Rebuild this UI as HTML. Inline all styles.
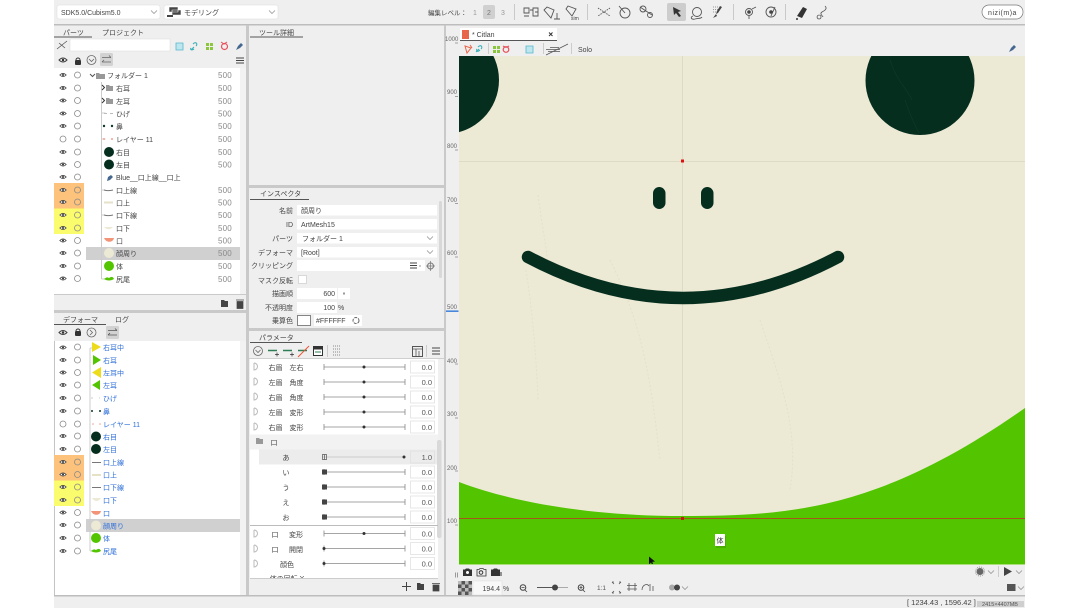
<!DOCTYPE html>
<html lang="ja"><head><meta charset="utf-8"><title>Cubism Editor</title>
<style>
html,body{margin:0;padding:0;background:#fff;width:1080px;height:608px;overflow:hidden}
svg{display:block}
body>svg{filter:blur(.3px)}
text{font-family:"Liberation Sans","Noto Sans CJK JP",sans-serif;font-size:7px;fill:#444}
.v{fill:#8a8a8a;font-size:8px;letter-spacing:.2px}
.b text,text.b{fill:#2f6fd8}
.r{text-anchor:end}.m{text-anchor:middle}
.n{font-size:7.5px;fill:#555}
.rl{font-size:6px;fill:#666}
.i{fill:none;stroke:#555;stroke-width:.9}
</style></head><body>
<svg width="1080" height="608" viewBox="0 0 1080 608" xmlns="http://www.w3.org/2000/svg">
<defs>
<g id="e"><path d="M-3.2 0Q0-3.2 3.2 0Q0 3.2-3.2 0Z" fill="#fff" stroke="#444" stroke-width=".8"/><circle r="1" fill="#333"/></g>
<circle id="o" r="3" fill="none" stroke="#8a8a8a" stroke-width=".8"/>
<path id="c" d="M-3-1.5L0 1.5L3-1.5" fill="none" stroke="#888" stroke-width=".7"/>
<g id="sl"><path d="M324 0H405M324-3V3M405-3V3" stroke="#888" stroke-width=".8" fill="none"/></g>
</defs>
<rect x="54" width="971" height="608" fill="#efefef"/>
<!-- top toolbar -->
<rect x="54" y="24" width="971" height="1.500" fill="#bdbdbd"/>
<rect x="57" y="5" width="103" height="14" rx="2" fill="#fff" stroke="#ddd" stroke-width=".5"/>
<text x="61" y="15">SDK5.0/Cubism5.0</text><use href="#c" x="154" y="12"/>
<rect x="164" y="5" width="114" height="14" rx="2" fill="#fff" stroke="#ddd" stroke-width=".5"/>
<path d="M169 7h9v5h-9zM172 10h9v5h-9z" fill="#444" stroke="#fff" stroke-width=".6"/><path d="M167 15h6v2h-6z" fill="#444"/>
<text x="184" y="15">モデリング</text><use href="#c" x="272" y="12"/>
<text x="428" y="15" style="font-size:6.500px">編集レベル：</text>
<text x="475" y="15" class="m" style="fill:#999">1</text>
<rect x="483" y="5" width="12" height="14" rx="2" fill="#d0d0d0"/><text x="489" y="15" class="m" style="fill:#777">2</text>
<text x="503" y="15" class="m" style="fill:#999">3</text>
<g stroke="#c9c9c9" fill="none"><path d="M514.500 4V20M587.500 4V20M733.500 4V20M785.500 4V20"/></g>
<g class="i">
<path d="M524 8h5v5h-5zM524 16h5M533 8h5v8h-5zM530 10h3M535 12h3"/>
<path d="M547 7l7 3-3 8-7-8zM557 13v6M554 19h6"/>
<path d="M568 6l8 3-4 7-6-7z"/>
<path d="M598 8l6 4-6 4M610 8l-6 4 6 4" stroke-dasharray="1.500 1"/>
<circle cx="625" cy="13" r="5"/><path d="M619 6l6 7"/>
<circle cx="643" cy="9" r="3"/><path d="M640 7l12 8"/><circle cx="650" cy="15" r="2.500"/>
</g>
<text x="571" y="20" style="font-size:5px">sim</text>
<rect x="667" y="3" width="19" height="18" rx="2" fill="#cdcdcd"/>
<path d="M673 7l8 4-3 1 3 4-2 1-3-4-2 2z" fill="#333"/>
<g class="i"><circle cx="697" cy="12" r="4.500"/><path d="M693 16c-3 1-2 4 2 3 3-1 6 0 7-2"/></g>
<path d="M713 7h5M713 9.500h5M713 12h5" stroke="#999" stroke-dasharray="1 1"/><path d="M722 7l-4 6-2 1 1-3 3-5z" fill="#444"/><path d="M716 14l-3 4 4-2z" fill="#444"/>
<g class="i"><circle cx="749" cy="12" r="3.500"/><path d="M752 9l4-2M749 16v3"/><circle cx="771" cy="12" r="5"/><path d="M771 16l4-9"/></g><circle cx="749" cy="12" r="1.800" fill="#444"/><circle cx="771" cy="12" r="1.800" fill="#444"/>
<path d="M797 16l6-9 4 2-5 9z" fill="#333"/><circle cx="797" cy="19" r="1" fill="#333"/>
<path d="M825 6c3 3-1 5-3 6-3 2 1 4 1 5M819 15a2 2 0 1 0 .1 0" fill="none" stroke="#555" stroke-width=".8"/>
<rect x="982" y="5" width="41" height="14" rx="7" fill="#fff" stroke="#777" stroke-width=".7"/>
<text x="1002.500" y="15" class="m" style="fill:#444;letter-spacing:.5px">nizi(m)a</text>

<!-- parts panel -->
<text x="63" y="35">パーツ</text><text x="102" y="35">プロジェクト</text>
<rect x="54" y="36.500" width="38" height="1" fill="#555"/>
<path d="M57 49L67 41M59 43l6 5" stroke="#555" fill="none" stroke-width=".8"/>
<rect x="70" y="39" width="100" height="12" fill="#fff" stroke="#ddd" stroke-width=".5"/>
<path d="M176 43h7v7h-7z" fill="#bde6ee" stroke="#58b7cc" stroke-width=".8"/>
<path d="M191 50l3-3M193 44c3-3 5 0 3 2M194 49c-3 2-4 0-3-1" fill="none" stroke="#3bb0b8" stroke-width="1.100"/>
<path d="M206 43h3v3h-3zM210 43h3v3h-3zM206 47h3v3h-3zM210 47h3v3h-3z" fill="#8cc63f"/>
<circle cx="224.500" cy="46.500" r="3" fill="none" stroke="#e8505b" stroke-width="1.200"/><path d="M221 42l3 2 3-2" fill="none" stroke="#e8505b"/>
<path d="M236 50l2-4 3-3 2 2-3 3z" fill="#46678f"/>
<g transform="translate(63,60) scale(1.250)"><use href="#e"/></g><rect x="75" y="60" width="6" height="5" rx="1" fill="#333"/><path d="M76 60a2 2 0 0 1 4 0" fill="none" stroke="#333"/>
<circle cx="91.500" cy="60" r="4.500" fill="none" stroke="#666" stroke-width=".8"/><path d="M89 59l2.500 2.500 2.500-2.500" fill="none" stroke="#666" stroke-width=".8"/>
<rect x="100" y="53" width="13" height="13" rx="1.500" fill="#d2d2d2"/><path d="M102 57.500h9M109 55.500l2 2M111 62h-9M104 60l-2 2" stroke="#666" fill="none" stroke-width=".8"/>
<path d="M236 58h8M236 60.500h8M236 63h8" stroke="#444"/>
<rect x="54" y="68" width="186" height="226" fill="#fff"/><rect x="240" y="68" width="6" height="226" fill="#f2f2f2"/>
<rect x="54" y="183" width="30" height="25.500" fill="#fdc27c"/><rect x="54" y="208.500" width="30" height="25.500" fill="#fbfb6e"/>
<rect x="86" y="247" width="154" height="13" fill="#d0d0d0"/>
<path d="M101.500 82V279M101.500 113h4M101.500 139h4M101.500 190h4M101.500 215h4M101.500 279h4" stroke="#ccc" fill="none"/>
<g>
<use href="#e" x="63" y="75"/><use href="#o" x="77.500" y="75"/>
<use href="#e" x="63" y="88"/><use href="#o" x="77.500" y="88"/>
<use href="#e" x="63" y="100.500"/><use href="#o" x="77.500" y="100.500"/>
<use href="#e" x="63" y="113.500"/><use href="#o" x="77.500" y="113.500"/>
<use href="#e" x="63" y="126"/><use href="#o" x="77.500" y="126"/>
<use href="#o" x="63" y="139"/><use href="#o" x="77.500" y="139"/>
<use href="#e" x="63" y="152"/><use href="#o" x="77.500" y="152"/>
<use href="#e" x="63" y="164.500"/><use href="#o" x="77.500" y="164.500"/>
<use href="#e" x="63" y="177"/><use href="#o" x="77.500" y="177"/>
<use href="#e" x="63" y="190"/><use href="#o" x="77.500" y="190"/>
<use href="#e" x="63" y="202"/><use href="#o" x="77.500" y="202"/>
<use href="#e" x="63" y="215"/><use href="#o" x="77.500" y="215"/>
<use href="#e" x="63" y="228"/><use href="#o" x="77.500" y="228"/>
<use href="#e" x="63" y="240.500"/><use href="#o" x="77.500" y="240.500"/>
<use href="#e" x="63" y="253"/><use href="#o" x="77.500" y="253"/>
<use href="#e" x="63" y="266"/><use href="#o" x="77.500" y="266"/>
<use href="#e" x="63" y="278.500"/><use href="#o" x="77.500" y="278.500"/>
</g>
<path d="M90 74l2.500 2.500L95 74" fill="none" stroke="#555"/><path d="M96 73h3l1 1h5v5h-9z" fill="#999"/>
<path d="M102 85l2.500 2.500L102 90M102 98l2.500 2.500L102 103" fill="none" stroke="#333"/>
<path d="M106 85h3l1 1h3v5h-7zM106 98h3l1 1h3v5h-7z" fill="#999"/>
<circle cx="104" cy="126" r="1.200" fill="#0a3a28"/><circle cx="112" cy="126" r="1.200" fill="#0a3a28"/>
<circle cx="104" cy="139" r="1" fill="#f2a090"/><circle cx="112" cy="139" r="1" fill="#f2a090"/>
<path d="M104 113.500h3M110 113.500h3" stroke="#bbb"/>
<circle cx="109" cy="152" r="5" fill="#062e1f"/><circle cx="109" cy="164.500" r="5" fill="#062e1f"/>
<path d="M107 181l1-4 3-2 2 2-3 3z" fill="#46678f"/>
<path d="M104 190c3 1 5 1 9 0" stroke="#777" fill="none"/><path d="M104 202.500h9" stroke="#e5e2c8" stroke-width="2"/>
<path d="M104 215c3 1 5 1 9 0" stroke="#777" fill="none"/><path d="M104 227c3 3 6 3 9 0z" fill="#ece9d4"/>
<path d="M104 238h10c-1 5-8 5-10 0z" fill="#f39478"/><circle cx="109" cy="253" r="5" fill="#ece9d4"/>
<circle cx="109" cy="266" r="5" fill="#52c400"/><path d="M104 279c3-2 3-2 5-1 3-2 4-1 5 1-3 2-7 2-10 0z" fill="#52c400"/>
<g>
<text x="107" y="78">フォルダー 1</text><text x="116" y="91">右耳</text><text x="116" y="104">左耳</text><text x="116" y="116.500">ひげ</text><text x="116" y="129">鼻</text><text x="116" y="142">レイヤー 11</text><text x="116" y="155">右目</text><text x="116" y="167.500">左目</text><text x="116" y="180">Blue__口上線__口上</text><text x="116" y="193">口上線</text><text x="116" y="205.500">口上</text><text x="116" y="218">口下線</text><text x="116" y="231">口下</text><text x="116" y="243.500">口</text><text x="116" y="256">顔周り</text><text x="116" y="269">体</text><text x="116" y="282">尻尾</text>
</g>
<g>
<text class="v" x="218" y="78">500</text><text class="v" x="218" y="91">500</text><text class="v" x="218" y="104">500</text><text class="v" x="218" y="116.500">500</text><text class="v" x="218" y="129">500</text><text class="v" x="218" y="142">500</text><text class="v" x="218" y="155">500</text><text class="v" x="218" y="167.500">500</text><text class="v" x="218" y="193">500</text><text class="v" x="218" y="205.500">500</text><text class="v" x="218" y="218">500</text><text class="v" x="218" y="231">500</text><text class="v" x="218" y="243.500">500</text><text class="v" x="218" y="256">500</text><text class="v" x="218" y="269">500</text><text class="v" x="218" y="282">500</text>
</g>
<rect x="54" y="294" width="192" height="1" fill="#c9c9c9"/>
<path d="M221 300h3l1 1h3v6h-7z" fill="#444"/><path d="M236 300h8M237 301.500h6v7h-6z" fill="#444" stroke="#444" stroke-width=".7"/>
<rect x="54" y="310" width="192" height="3" fill="#c9c9c9"/>

<!-- deformer panel -->
<text x="63" y="322">デフォーマ</text><text x="115" y="322">ログ</text>
<rect x="54" y="324" width="52" height="1" fill="#555"/>
<g transform="translate(63,332.500) scale(1.250)"><use href="#e"/></g><rect x="75" y="331" width="6" height="5" rx="1" fill="#333"/><path d="M76 331a2 2 0 0 1 4 0" fill="none" stroke="#333"/>
<circle cx="91.500" cy="332.500" r="4.500" fill="none" stroke="#666" stroke-width=".8"/><path d="M90 330l2.500 2.500L90 335" fill="none" stroke="#666" stroke-width=".8"/>
<rect x="106" y="326" width="13" height="13" rx="1.500" fill="#d2d2d2"/><path d="M108 330.500h9M115 328.500l2 2M117 335h-9M110 333l-2 2" stroke="#555" fill="none" stroke-width=".8"/>
<rect x="55" y="341" width="185" height="254" fill="#fff"/><rect x="240" y="341" width="6" height="254" fill="#f2f2f2"/>
<rect x="54" y="341" width="1" height="254" fill="#c4c4c4"/>
<rect x="54" y="455" width="30" height="25.500" fill="#fdc27c"/><rect x="54" y="480.500" width="30" height="25.500" fill="#fbfb6e"/>
<rect x="86" y="519" width="154" height="13" fill="#d0d0d0"/>
<path d="M90 348V551M90 348h3M90 551h3" stroke="#ccc" fill="none"/>
<g>
<use href="#e" x="63" y="347.500"/><use href="#o" x="77.500" y="347"/>
<use href="#e" x="63" y="360"/><use href="#o" x="77.500" y="360"/>
<use href="#e" x="63" y="372.500"/><use href="#o" x="77.500" y="372.500"/>
<use href="#e" x="63" y="385"/><use href="#o" x="77.500" y="385"/>
<use href="#e" x="63" y="398"/><use href="#o" x="77.500" y="398"/>
<use href="#e" x="63" y="411"/><use href="#o" x="77.500" y="411"/>
<use href="#o" x="63" y="424"/><use href="#o" x="77.500" y="424"/>
<use href="#e" x="63" y="436"/><use href="#o" x="77.500" y="436"/>
<use href="#e" x="63" y="449"/><use href="#o" x="77.500" y="449"/>
<use href="#e" x="63" y="462"/><use href="#o" x="77.500" y="462"/>
<use href="#e" x="63" y="474.500"/><use href="#o" x="77.500" y="474.500"/>
<use href="#e" x="63" y="487"/><use href="#o" x="77.500" y="487"/>
<use href="#e" x="63" y="500"/><use href="#o" x="77.500" y="500"/>
<use href="#e" x="63" y="512.500"/><use href="#o" x="77.500" y="512.500"/>
<use href="#e" x="63" y="525"/><use href="#o" x="77.500" y="525"/>
<use href="#e" x="63" y="538"/><use href="#o" x="77.500" y="538"/>
<use href="#e" x="63" y="551"/><use href="#o" x="77.500" y="551"/>
</g>
<path d="M92 342l9 5-9 5z" fill="#ecdc1c"/><path d="M93 355l8 5-8 5z" fill="#52c400"/><path d="M101 367v11l-9-5.500z" fill="#ecdc1c"/><path d="M100 380v10l-8-5z" fill="#52c400"/>
<circle cx="92" cy="411" r="1" fill="#0a3a28"/><circle cx="100" cy="411" r="1" fill="#0a3a28"/><circle cx="93" cy="424" r=".8" fill="#f2a090"/><circle cx="100" cy="424" r=".8" fill="#f2a090"/>
<path d="M91 398h2M99 398h1" stroke="#ccc"/>
<circle cx="96" cy="436.500" r="5" fill="#062e1f"/><circle cx="96" cy="449" r="5" fill="#062e1f"/>
<path d="M92 462.500h9" stroke="#777"/><path d="M92 475h9" stroke="#e5e2c8" stroke-width="2"/><path d="M92 487.500h9" stroke="#777"/><path d="M92 498c3 4 6 4 9 0z" fill="#ece9d4"/>
<path d="M91 511h10c-1 5-8 5-10 0z" fill="#f39478"/><circle cx="96" cy="525.500" r="5" fill="#ece9d4"/><circle cx="96" cy="538" r="5" fill="#52c400"/><path d="M91 551c3-2 3-2 5-1 3-2 4-1 5 1-3 2-7 2-10 0z" fill="#52c400"/>
<g class="b">
<text x="103" y="350">右耳中</text><text x="103" y="363">右耳</text><text x="103" y="375.500">左耳中</text><text x="103" y="388">左耳</text><text x="103" y="401">ひげ</text><text x="103" y="414">鼻</text><text x="103" y="427">レイヤー 11</text><text x="103" y="439.500">右目</text><text x="103" y="452">左目</text><text x="103" y="465">口上線</text><text x="103" y="477.500">口上</text><text x="103" y="490">口下線</text><text x="103" y="503">口下</text><text x="103" y="516">口</text><text x="103" y="528.500">顔周り</text><text x="103" y="541">体</text><text x="103" y="554">尻尾</text>
</g>
<rect x="54" y="595" width="971" height="1.500" fill="#bdbdbd"/>

<!-- vertical dividers -->
<rect x="246" y="25" width="3" height="570" fill="#c9c9c9"/>
<rect x="444" y="25" width="2" height="570" fill="#c9c9c9"/>

<!-- tool detail -->
<text x="259" y="35">ツール詳細</text><rect x="250" y="36.500" width="53" height="1" fill="#555"/>
<rect x="249" y="185" width="195" height="3" fill="#c9c9c9"/>

<!-- inspector -->
<text x="260" y="196">インスペクタ</text><rect x="250" y="199" width="59" height="1" fill="#555"/>
<g>
<text class="r" x="293" y="213">名前</text><text class="r" x="293" y="227">ID</text><text class="r" x="293" y="241">パーツ</text><text class="r" x="293" y="255">デフォーマ</text><text class="r" x="293" y="268">クリッピング</text><text class="r" x="293" y="283">マスク反転</text><text class="r" x="293" y="296">描画順</text><text class="r" x="293" y="310">不透明度</text><text class="r" x="293" y="323">乗算色</text>
</g>
<rect x="297" y="205" width="140" height="10.500" fill="#fff"/><rect x="297" y="219" width="140" height="10.500" fill="#fff"/><rect x="297" y="233" width="140" height="10.500" fill="#fff"/><rect x="297" y="247" width="140" height="10.500" fill="#fff"/><rect x="297" y="260" width="128" height="11" fill="#fff"/>
<text x="301" y="213">顔周り</text><text x="301" y="227">ArtMesh15</text><text x="302" y="241">フォルダー 1</text><text x="301" y="255">[Root]</text>
<use href="#c" x="430" y="238"/><use href="#c" x="430" y="252"/>
<path d="M410 263h7M410 265.500h7M410 268h7" stroke="#444"/><circle cx="420" cy="266" r=".6" fill="#555"/>
<circle cx="430.500" cy="266" r="3" fill="none" stroke="#777"/><path d="M430.500 261v10M426 266h9" stroke="#777" stroke-width=".7"/>
<rect x="298.500" y="275.500" width="8" height="8" fill="#fff" stroke="#ccc" stroke-width=".7"/>
<rect x="297" y="288" width="40" height="11" fill="#fff"/><text class="r" x="335" y="296">600</text>
<rect x="338" y="288" width="12" height="11" fill="#fff"/><rect x="343" y="292.500" width="2" height="2" fill="#999"/>
<rect x="297" y="302" width="40" height="11" fill="#fff"/><text class="r" x="335" y="310">100</text><text x="338" y="310">%</text>
<rect x="297.500" y="315.500" width="13" height="10" fill="#fff" stroke="#555" stroke-width=".7"/>
<rect x="314" y="315" width="48" height="11" fill="#fff"/><text x="316" y="323">#FFFFFF</text>
<circle cx="356" cy="320.500" r="3" fill="none" stroke="#666" stroke-dasharray="3 1"/>
<rect x="439" y="201" width="3" height="77" rx="1.500" fill="#d8d8d8"/>
<rect x="249" y="328" width="195" height="3" fill="#c9c9c9"/>

<!-- params -->
<text x="259" y="340">パラメータ</text><rect x="250" y="342" width="52" height="1" fill="#555"/>
<circle cx="258" cy="351" r="4.500" fill="none" stroke="#666" stroke-width=".8"/><path d="M255.500 350l2.500 2.500 2.500-2.500" fill="none" stroke="#666" stroke-width=".8"/>
<path d="M268 350.500h9M283 350.500h9" stroke="#2f7d55" stroke-width="1.500"/><path d="M275 354.500h4M277 352.500v4M290 354.500h4M292 352.500v4" stroke="#333" stroke-width=".7"/>
<path d="M298 350.500h9" stroke="#2f7d55" stroke-width="1.500"/><path d="M298 357l11-11" stroke="#ee5533"/>
<rect x="313.500" y="346.500" width="9" height="9" fill="#fff" stroke="#333"/><rect x="314" y="347" width="8" height="2.500" fill="#333"/><path d="M315 352h6" stroke="#2f7d55"/>
<path d="M333 346h7M333 349h7M333 352h7M333 355h7" stroke="#888" stroke-dasharray="1 1"/>
<path d="M327.500 345V357M426.500 345V357" stroke="#ccc"/>
<rect x="412.500" y="346.500" width="10" height="10" fill="none" stroke="#555"/><path d="M412 349h11M416 349v7M419 351v5" stroke="#555" stroke-width=".8"/>
<path d="M432 348h8M432 351h8M432 354h8" stroke="#444"/>
<rect x="249" y="358" width="195" height="1" fill="#cfcfcf"/>
<rect x="250" y="359" width="188" height="220" fill="#fff"/>
<rect x="250" y="434.500" width="188" height="15" fill="#f2f2f2"/>
<rect x="259" y="449.500" width="179" height="15" fill="#ececec"/>
<rect x="438" y="359" width="6" height="220" fill="#f0f0f0"/><rect x="437" y="440" width="4.500" height="98" rx="2" fill="#d9d9d9"/>
<rect x="250" y="525" width="188" height="1" fill="#bbb"/>
<g class="m">
<text class="m" x="275.500" y="370">右眉</text><text class="m" x="296.500" y="370">左右</text>
<text class="m" x="275.500" y="385">左眉</text><text class="m" x="296.500" y="385">角度</text>
<text class="m" x="275.500" y="400">右眉</text><text class="m" x="296.500" y="400">角度</text>
<text class="m" x="275.500" y="415">左眉</text><text class="m" x="296.500" y="415">変形</text>
<text class="m" x="275.500" y="430">右眉</text><text class="m" x="296.500" y="430">変形</text>
<text class="m" x="274" y="445">口</text>
<text class="m" x="286" y="460">あ</text><text class="m" x="286" y="475">い</text><text class="m" x="286" y="490">う</text><text class="m" x="286" y="505">え</text><text class="m" x="286" y="520">お</text>
<text class="m" x="275" y="537">口</text><text class="m" x="296" y="537">変形</text><text class="m" x="275" y="552">口</text><text class="m" x="296" y="552">開閉</text>
<text class="m" x="287" y="567">顔色</text><text class="m" x="287" y="581">体の回転 X</text>
</g>
<path d="M254 363v7a1 1 0 0 0 0-7M254 378v7a1 1 0 0 0 0-7M254 393v7a1 1 0 0 0 0-7M254 408v7a1 1 0 0 0 0-7M254 423v7a1 1 0 0 0 0-7M254 530v7a1 1 0 0 0 0-7M254 545v7a1 1 0 0 0 0-7M254 560v7a1 1 0 0 0 0-7" fill="none" stroke="#bbb"/>
<path d="M256 438h3l1 1h3v5h-7z" fill="#999"/>
<use href="#sl" y="367"/><use href="#sl" y="382"/><use href="#sl" y="397"/><use href="#sl" y="412"/><use href="#sl" y="427"/><use href="#sl" y="472"/><use href="#sl" y="487"/><use href="#sl" y="502"/><use href="#sl" y="517"/><use href="#sl" y="533.500"/><use href="#sl" y="548.500"/><use href="#sl" y="563.500"/>
<path d="M322 457H405" stroke="#ccc"/>
<g fill="#333"><circle cx="364" cy="367" r="1.500"/><circle cx="364" cy="382" r="1.500"/><circle cx="364" cy="397" r="1.500"/><circle cx="364" cy="412" r="1.500"/><circle cx="364" cy="427" r="1.500"/><circle cx="404" cy="457" r="1.500"/><circle cx="364" cy="533.500" r="1.500"/><circle cx="324" cy="548.500" r="1.500"/><circle cx="324" cy="563.500" r="1.500"/></g>
<g fill="none" stroke="#555" stroke-width=".7"><path d="M322.500 454.500h4v5h-4zM324.500 454.500v5"/></g>
<g fill="#444"><rect x="322" y="469.500" width="5" height="5"/><rect x="322" y="484.500" width="5" height="5"/><rect x="322" y="499.500" width="5" height="5"/><rect x="322" y="514.500" width="5" height="5"/></g>
<g fill="#fff" stroke="#ddd" stroke-width=".7"><rect x="410.500" y="361" width="24" height="12"/><rect x="410.500" y="376" width="24" height="12"/><rect x="410.500" y="391" width="24" height="12"/><rect x="410.500" y="406" width="24" height="12"/><rect x="410.500" y="421" width="24" height="12"/><rect x="410.500" y="466" width="24" height="12"/><rect x="410.500" y="481" width="24" height="12"/><rect x="410.500" y="496" width="24" height="12"/><rect x="410.500" y="511" width="24" height="12"/><rect x="410.500" y="527.500" width="24" height="12"/><rect x="410.500" y="542.500" width="24" height="12"/><rect x="410.500" y="557.500" width="24" height="12"/></g>
<rect x="410.500" y="451" width="24" height="12" fill="#ececec" stroke="#ddd" stroke-width=".7"/>
<g><text class="r n" x="432" y="370">0.0</text><text class="r n" x="432" y="385">0.0</text><text class="r n" x="432" y="400">0.0</text><text class="r n" x="432" y="415">0.0</text><text class="r n" x="432" y="430">0.0</text><text class="r n" x="432" y="460">1.0</text><text class="r n" x="432" y="475">0.0</text><text class="r n" x="432" y="490">0.0</text><text class="r n" x="432" y="505">0.0</text><text class="r n" x="432" y="520">0.0</text><text class="r n" x="432" y="536.500">0.0</text><text class="r n" x="432" y="551.500">0.0</text><text class="r n" x="432" y="566.500">0.0</text></g>
<rect x="250" y="578" width="194" height="17" fill="#efefef"/><rect x="250" y="578" width="188" height="1" fill="#ccc"/>
<path d="M402 586.500h9M406.500 582v9" stroke="#444"/>
<path d="M417 583h3l1 1h3v6h-7z" fill="#444"/><path d="M432 583.500h8M433 585h6v6h-6z" fill="#444" stroke="#444" stroke-width=".7"/>

<!-- canvas tab area -->
<rect x="460" y="28" width="97" height="12" fill="#fff"/><rect x="460" y="40" width="97" height="1" fill="#555"/>
<rect x="462" y="30" width="7" height="9" fill="#e8674a"/><text x="472" y="37">* Citlan</text>
<path d="M549 32.500l3.500 3.500M552.500 32.500L549 36" stroke="#333"/>
<g fill="none"><path d="M465 46l6 2-4 5zM470 45l2 3" stroke="#e8674a"/><path d="M476 52l3-3M478 47c3-3 5 0 3 2M480 50c-3 3-4 0-3-1" stroke="#3bb0b8" stroke-width="1.100"/></g>
<path d="M493 46h3v3h-3zM497 46h3v3h-3zM493 50h3v3h-3zM497 50h3v3h-3z" fill="#8cc63f"/>
<circle cx="506" cy="49.500" r="2.800" fill="none" stroke="#e8505b" stroke-width="1.200"/><path d="M503 46l3 1.500 3-1.500" fill="none" stroke="#e8505b"/>
<path d="M526 46h7v7h-7z" fill="#bde6ee" stroke="#58b7cc" stroke-width=".8"/>
<path d="M488.500 43V54M543.500 43V54M571.500 43V54" stroke="#ccc"/>
<path d="M546 49.500h14M548 51.500h12M550 47.500h9M546 55l22-11" stroke="#555" stroke-width=".7" fill="none"/>
<text x="578" y="52">Solo</text>
<path d="M1009 52l2-4 3-3 2 2-3 3z" fill="#46678f"/>

<!-- ruler -->
<rect x="446" y="41" width="13" height="523" fill="#efefef"/>
<text x="445" y="41" class="rl">1000</text><text x="447" y="94" class="rl">900</text><text x="447" y="148" class="rl">800</text><text x="447" y="202" class="rl">700</text><text x="447" y="255" class="rl">600</text><text x="447" y="309" class="rl">500</text><text x="447" y="363" class="rl">400</text><text x="447" y="416" class="rl">300</text><text x="447" y="470" class="rl">200</text><text x="447" y="523" class="rl">100</text>
<path d="M455 43h3M455 96.500h3M455 150h3M455 203.500h3M455 257h3M455 364h3M455 418h3M455 471h3M455 525h3" stroke="#888" stroke-width=".7"/>
<rect x="446" y="310.500" width="12.500" height="1.300" fill="#1f6fd8"/>

<!-- canvas -->
<svg x="459" y="56" width="566" height="508.500" viewBox="459 56 566 508.500">
<rect x="459" y="56" width="566" height="509" fill="#ece9d4"/>
<circle cx="445" cy="80" r="54" fill="#062e1f"/>
<circle cx="920" cy="80.500" r="54.500" fill="#062e1f"/>
<path d="M905 100c4 12 8 22 14 33M890 60c6 20 18 30 22 40" stroke="#0f3a2a" stroke-width=".6" fill="none"/>
<path d="M538 195c4 30 8 50 10 70M526 270c6 40 10 80 12 130M610 260c30 60 40 110 50 200M760 320c20 60 40 110 30 170" stroke="#e4e1cb" stroke-width="1" fill="none" stroke-dasharray="2 2"/>
<path d="M682.500 56V564M459 161.500H1025" stroke="#dedbc4" stroke-width="1"/>
<path d="M459 482C520 505 600 516 683 516C790 516 880 510 1025 408V565H459Z" fill="#52c400"/>
<rect x="653" y="187" width="12.500" height="22" rx="6.250" fill="#062e1f"/>
<rect x="701" y="187" width="12.500" height="22" rx="6.250" fill="#062e1f"/>
<path d="M528 257Q683 339 838 257" fill="none" stroke="#062e1f" stroke-width="12.500" stroke-linecap="round"/>
<path d="M459 518.500H1025" stroke="#a5561a" stroke-width="1"/>
<rect x="681" y="517" width="3" height="3" fill="#c41a10"/>
<rect x="681" y="159.500" width="3" height="3" fill="#e01010"/>
<rect x="716" y="536" width="10" height="12" fill="#46a000" opacity=".6"/>
<rect x="715" y="534" width="10" height="12" fill="#fff"/>
<text x="720" y="543" class="m" style="fill:#333">体</text>
<path d="M649 556.500l0 8 2-2 1.500 3 1.200-.6-1.500-3 2.800-.4z" fill="#111"/>
</svg>
<rect x="459" y="564" width="566" height="1" fill="#a9dd7a"/>

<!-- canvas footer -->
<path d="M455.500 572.500v5M457.500 572.500v5" stroke="#777" stroke-width=".7"/>
<path d="M463 569.500h2l1-1h3l1 1h2v6.500h-9z" fill="#333"/><circle cx="467.500" cy="572.500" r="1.500" fill="#fff"/>
<path d="M477 569.500h2l1-1h3l1 1h2v6.500h-9z" fill="none" stroke="#333" stroke-width=".8"/><circle cx="481" cy="572.500" r="1.800" fill="none" stroke="#333"/>
<path d="M491 569.500h2l1-1h3l1 1h2v6.500h-9z" fill="#333"/><path d="M500 573h2M500 575h2" stroke="#333"/>
<rect x="458" y="581" width="14" height="14" fill="#555"/>
<path d="M458 581h3.500v3.500H458zM465 581h3.500v3.500H465zM461.500 584.500H465V588h-3.500zM468.500 584.500H472V588h-3.500zM458 588h3.500v3.500H458zM465 588h3.500v3.500H465zM461.500 591.500H465V595h-3.500zM468.500 591.500H472V595h-3.500z" fill="#bbb"/>
<rect x="473" y="581" width="29" height="14" fill="#f8f8f8" stroke="#ddd" stroke-width=".5"/>
<text class="r" x="500" y="591">194.4</text><text x="503" y="591">%</text>
<circle cx="523" cy="587.500" r="2.800" fill="none" stroke="#444"/><path d="M525 590l2 2M521.500 587.500h3" stroke="#444" stroke-width=".8"/>
<path d="M537 587.500h31" stroke="#aaa"/><path d="M537 587.500h18" stroke="#555"/><circle cx="555" cy="587.500" r="3" fill="#444"/>
<circle cx="581" cy="587.500" r="2.800" fill="none" stroke="#444"/><path d="M583 590l2 2M579.500 587.500h3M581 586v3" stroke="#444" stroke-width=".8"/>
<text x="597" y="590" style="font-size:6.500px;fill:#555">1:1</text>
<path d="M612 582l2 2M621 582l-2 2M612 593l2-2M621 593l-2-2M612 582h2M621 582h-2M612 593h2M621 593h-2" stroke="#555" stroke-width=".8" fill="none"/>
<path d="M627 585.500h10M627 589h10M629 583v8M635 583v8" stroke="#555" stroke-width=".8"/>
<path d="M642 590c0-5 5-7 7-4M650 584v7M653 586v5" stroke="#555" fill="none" stroke-width=".8"/>
<circle cx="672" cy="587.500" r="3" fill="#aaa"/><circle cx="677" cy="587.500" r="3" fill="#444"/><use href="#c" x="685" y="588"/>
<circle cx="980" cy="571.500" r="3.500" fill="#666"/><circle cx="980" cy="571.500" r="4.500" fill="none" stroke="#999" stroke-dasharray="1 1"/><use href="#c" x="991" y="572"/>
<path d="M998.500 566V577" stroke="#ccc"/>
<path d="M1004 567l8 4.500-8 4.500z" fill="#444"/><use href="#c" x="1019" y="572"/>
<rect x="1007" y="584" width="8.500" height="7" fill="#555"/><use href="#c" x="1021" y="588"/>

<!-- status -->
<text x="907" y="605" style="font-size:7.500px">[ 1234.43 , 1596.42 ]</text>
<rect x="977" y="601" width="47" height="6" fill="#cfcfcf"/>
<text x="1000" y="606" class="m" style="font-size:5.500px;fill:#555">2415×4407MB</text>
</svg>
</body></html>
